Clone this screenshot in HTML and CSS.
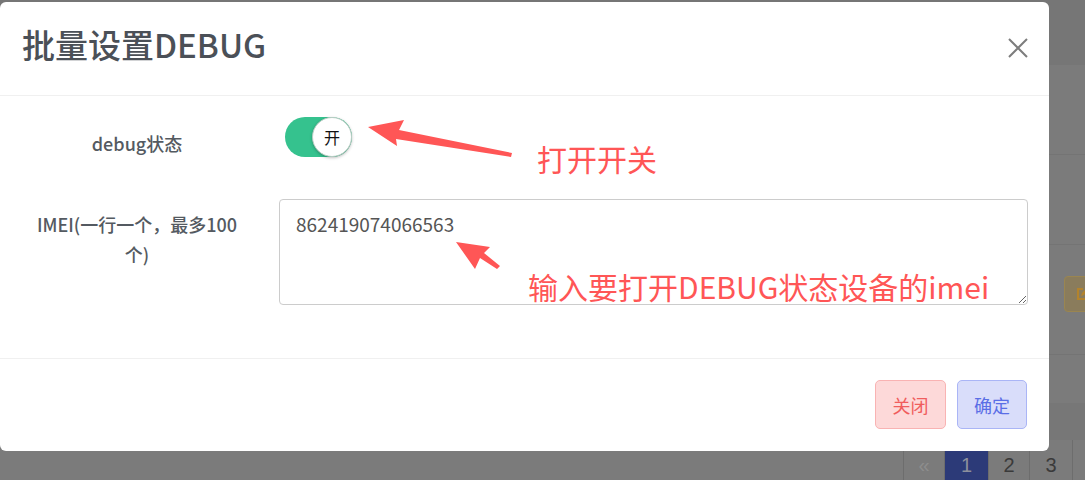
FILE: index.html
```html
<!DOCTYPE html>
<html lang="zh-CN">
<head>
    <meta charset="UTF-8">
    <meta name="viewport" content="width=device-width, initial-scale=1.0">
    <title>批量设置DEBUG</title>
    <link rel="stylesheet" href="styles.css">
</head>
<body>

    <!-- Page behind the dimmed backdrop -->
    <div class="page">
        <div class="page-top"></div>
        <div class="page-row"></div>
        <div class="page-row"></div>
        <div class="page-row page-row-tall">
            <span class="edit-btn">
                <svg width="14" height="14" viewBox="0 0 14 14"><path d="M12 7v5H2V2h5" fill="none" stroke="#b3832c" stroke-width="2"/><path d="M5 9l1-3 5-5 2 2-5 5z" fill="#b3832c"/></svg>
            </span>
        </div>
        <div class="page-gap"></div>
        <div class="page-band"></div>
        <div class="pager">
            <span class="pager-prev">«</span>
            <span class="pager-active">1</span>
            <span>2</span>
            <span class="pager-wide">3</span>
            <span></span>
        </div>
    </div>

    <!-- Modal -->
    <div class="modal">
        <div class="modal-header">
            <h3>批量设置DEBUG</h3>
            <button class="close" type="button">
                <svg width="20" height="20" viewBox="0 0 20 20"><path d="M1 1L19 19M19 1L1 19" stroke="#7d7d7d" stroke-width="2"/></svg>
            </button>
        </div>

        <div class="modal-body">
            <label class="form-label">debug状态</label>
            <div class="form-control-wrap">
                <div class="switch"><span class="knob">开</span></div>
            </div>

            <label class="form-label form-label-multi">IMEI(一行一个，最多100 个)</label>
            <textarea class="imei-input">862419074066563</textarea>
        </div>

        <div class="modal-footer">
            <button class="btn btn-cancel" type="button">关闭</button>
            <button class="btn btn-ok" type="button">确定</button>
        </div>
    </div>

    <!-- Screenshot annotations -->
    <svg class="notes" width="1085" height="480" viewBox="0 0 1085 480">
        <polygon points="368,127 404,120 399,130 512,153 511,157 396,139 397,146" fill="#ff5656"/>
        <polygon points="456,242 490,247 484,253 500,266 497,269 480,258 475,269" fill="#ff5656"/>
        <text x="537" y="171" class="note-text note-big">打开开关</text>
        <text x="528" y="299" class="note-text">输入要打开DEBUG状态设备的imei</text>
    </svg>

</body>
</html>
```

FILE: styles.css
```css
body {
    margin: 0;
    width: 1085px;
    height: 480px;
    overflow: hidden;
    position: relative;
    background-color: #7b7b7b;
    font-family: "Noto Sans CJK SC", sans-serif;
}

/* background page (already dimmed) */
.page-top {
    height: 65px;
    background-color: #767676;
}
.page-row {
    height: 89px;
    border-bottom: 1px solid #747474;
}
.page-row-tall {
    height: 78px;
    padding-top: 31px;
}
.edit-btn {
    display: flex;
    align-items: center;
    justify-content: center;
    width: 38px;
    height: 36px;
    margin-left: 1064px;
    box-sizing: border-box;
    background-color: #8a7c5c;
    border: 1px solid #9a8550;
    border-radius: 4px;
}
.page-gap {
    height: 48px;
}
.page-band {
    height: 37px;
    background-color: #777777;
}
.pager {
    display: flex;
    height: 40px;
    padding-left: 903px;
    font-family: "Liberation Sans", Arial, sans-serif;
    font-size: 20px;
    color: #3a3a3a;
}
.pager span {
    flex-shrink: 0;
    width: 41px;
    height: 40px;
    box-sizing: border-box;
    padding-top: 11px;
    border-left: 1px solid #6d6d6d;
    display: flex;
    align-items: center;
    justify-content: center;
}
.pager .pager-prev {
    color: #8d8d8d;
}
.pager .pager-active {
    width: 44px;
    background-color: #2c3a78;
    color: #8c8f9c;
}
.pager .pager-wide {
    width: 43px;
}

/* modal */
.modal {
    position: absolute;
    top: 2px;
    left: 0;
    width: 1049px;
    background-color: white;
    border-radius: 6px;
}
.modal-header {
    display: flex;
    justify-content: space-between;
    align-items: flex-start;
    padding: 22px 21px 31px 22px;
    border-bottom: 1px solid #f0f0f0;
}
.modal-header h3 {
    margin: 0;
    font-size: 33px;
    line-height: 40px;
    font-weight: 500;
    color: #4b5057;
}
.close {
    margin-top: 14px;
    padding: 0;
    border: none;
    background: none;
    width: 20px;
    height: 20px;
}
.modal-body {
    display: grid;
    grid-template-columns: 274px 1fr;
    column-gap: 5px;
    row-gap: 42px;
    padding: 21px 21px 53px 0;
}
.form-label {
    padding: 14px 28px 0;
    font-size: 18px;
    line-height: 24px;
    font-weight: 500;
    color: #545a61;
    text-align: center;
}
.form-label-multi {
    padding-top: 10px;
    line-height: 30px;
}
.switch {
    display: flex;
    justify-content: flex-end;
    width: 67px;
    height: 40px;
    margin-left: 6px;
    border-radius: 20px;
    background-color: #35c28e;
}
.knob {
    width: 40px;
    height: 40px;
    box-sizing: border-box;
    border-radius: 50%;
    background-color: white;
    border: 1px solid #b9cdc4;
    box-shadow: 0 1px 3px rgba(0, 0, 0, 0.25);
    display: flex;
    align-items: center;
    justify-content: center;
    font-size: 16px;
    color: #111;
}
.imei-input {
    height: 106px;
    box-sizing: border-box;
    padding: 12px 16px;
    border: 1px solid #cccccc;
    border-radius: 4px;
    font-family: "Noto Sans CJK SC", sans-serif;
    font-size: 19px;
    line-height: 24px;
    color: #555;
    resize: vertical;
    outline: none;
}
.modal-footer {
    display: flex;
    justify-content: flex-end;
    gap: 11px;
    padding: 21px 22px 22px;
    border-top: 1px solid #f0f0f0;
}
.btn {
    width: 71px;
    height: 49px;
    padding: 0;
    border-radius: 5px;
    font-family: "Noto Sans CJK SC", sans-serif;
    font-size: 18px;
}
.btn-cancel {
    background-color: #fdd9d9;
    border: 1px solid #f9b3b3;
    color: #f05d5d;
}
.btn-ok {
    width: 70px;
    background-color: #d9ddfa;
    border: 1px solid #aab5f6;
    color: #5a6ee6;
}

/* annotations */
.notes {
    position: absolute;
    top: 0;
    left: 0;
    pointer-events: none;
}
.note-text {
    font-family: "Noto Sans CJK SC", sans-serif;
    font-size: 30px;
    fill: #ff5656;
}
.note-big {
    font-size: 30px;
}
```
